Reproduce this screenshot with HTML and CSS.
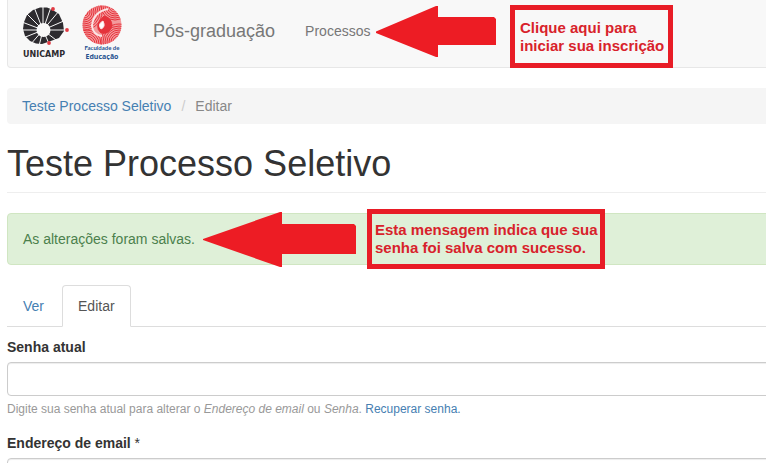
FILE: index.html
```html
<!DOCTYPE html>
<html lang="pt-BR">
<head>
<meta charset="utf-8">
<title>Teste Processo Seletivo</title>
<link rel="stylesheet" href="styles.css">
</head>
<body>
<div class="page">
  <header class="navbar">
    <a class="logo" href="#" aria-label="Unicamp">
      <svg width="48" height="60" viewBox="0 0 48 60">
        <path d="M30 9.500 L25 7.500 L18 7.500 L11 10 L5 15 L2 22 L1 29 L3 36 L8 41 L14 43.500 L20 44 L26 42 L37 38 L42 31 L41 23 L37 14Z" fill="#2d2b2f"/>
        <g stroke="#f8f8f8" stroke-width="1">
          <path d="M21 30L21 5M21 30L12 7M21 30L4 13M21 30L0 22M21 30H0M21 30L1 38M21 30L8 45M21 30L17 46M21 30L28 46M21 30L38 43M21 30H45M21 30L44 20M21 30L37 11M21 30L29 7"/>
        </g>
        <circle cx="21.500" cy="30" r="7" fill="#f8f8f8"/>
        <g fill="#e13a43"><circle cx="31" cy="9" r="1.900"/><circle cx="45" cy="30" r="1.900"/><circle cx="27" cy="43" r="1.900"/></g>
        <text class="unicamp-name" x="1" y="57" fill="#2d2b2f">UNICAMP</text>
      </svg>
    </a>
    <a class="logo" href="#" aria-label="Faculdade de Educação">
      <svg width="46" height="60" viewBox="0 0 46 60">
        <defs><clipPath id="disc"><circle cx="23" cy="25" r="19.500"/></clipPath></defs>
        <circle cx="23" cy="25" r="19.500" fill="#f39a9c"/>
        <g clip-path="url(#disc)" fill="none" stroke="#e5333c">
          <g stroke-width="1">
            <circle cx="5" cy="12" r="4"/><circle cx="5" cy="12" r="6"/><circle cx="5" cy="12" r="8"/><circle cx="5" cy="12" r="10"/><circle cx="5" cy="12" r="12"/><circle cx="5" cy="12" r="14"/><circle cx="5" cy="12" r="16"/><circle cx="5" cy="12" r="18"/>
            <circle cx="40" cy="42" r="4"/><circle cx="40" cy="42" r="6"/><circle cx="40" cy="42" r="8"/><circle cx="40" cy="42" r="10"/><circle cx="40" cy="42" r="12"/><circle cx="40" cy="42" r="14"/><circle cx="40" cy="42" r="16"/><circle cx="40" cy="42" r="18"/>
            <circle cx="36" cy="6" r="4"/><circle cx="36" cy="6" r="6"/><circle cx="36" cy="6" r="8"/><circle cx="36" cy="6" r="10"/><circle cx="36" cy="6" r="12"/><circle cx="36" cy="6" r="14"/>
            <circle cx="8" cy="44" r="4"/><circle cx="8" cy="44" r="6"/><circle cx="8" cy="44" r="8"/><circle cx="8" cy="44" r="10"/><circle cx="8" cy="44" r="12"/><circle cx="8" cy="44" r="14"/>
          </g>
          <path d="M29 9Q14 12 13 26Q14 35 23 36" stroke="#fbe5e5" stroke-width="2"/>
          <path d="M25 16Q33 18 33 26Q30 35 22 33Q14 26 25 16Z" fill="#e5333c"/>
          <path d="M24 21Q18 24 22 29Q27 27 24 21Z" fill="#fff" stroke="#fbe5e5"/>
        </g>
        <text class="faculty-small" x="23" y="50" text-anchor="middle" fill="#24508e">Faculdade de</text>
        <text class="faculty-large" x="23" y="59" text-anchor="middle" fill="#24508e">Educação</text>
      </svg>
    </a>
    <a class="brand" href="#">Pós-graduação</a>
    <nav><a class="nav-link" href="#">Processos</a></nav>
    <svg class="arrow arrow-nav" width="120" height="52" viewBox="0 0 120 52"><path d="M0 25.500L60 0H62V11H118L120 13V39H62V51H60L0 27Z" fill="#ed1c24"/></svg>
    <div class="callout callout-nav">Clique aqui para<br>iniciar sua inscrição</div>
  </header>

  <ol class="breadcrumb">
    <li><a href="#">Teste Processo Seletivo</a></li>
    <li>Editar</li>
  </ol>

  <h1>Teste Processo Seletivo</h1>

  <div class="alert" role="status">
    As alterações foram salvas.
    <svg class="arrow arrow-alert" width="153" height="56" viewBox="0 0 153 56"><path d="M0 27L77 0H79V12H151L153 14V42H79V55H77L0 28Z" fill="#ed1c24"/></svg>
    <div class="callout callout-alert">Esta mensagem indica que sua<br>senha foi salva com sucesso.</div>
  </div>

  <nav class="tabs">
    <a href="#">Ver</a>
    <a class="active" href="#" aria-current="page">Editar</a>
  </nav>

  <form>
    <div class="field">
      <label for="senha">Senha atual</label>
      <input id="senha" type="password">
      <p class="help">Digite sua senha atual para alterar o <em>Endereço de email</em> ou <em>Senha</em>. <a href="#">Recuperar senha.</a></p>
    </div>
    <div class="field">
      <label for="email">Endereço de email <span class="required">*</span></label>
      <input id="email" type="email">
    </div>
  </form>
</div>
</body>
</html>
```

FILE: styles.css
```css
* { box-sizing: border-box; }

html { overflow-x: hidden; scrollbar-width: none; }

body {
  margin: 0;
  background: #fff;
  color: #333;
  font: 14px/20px "Liberation Sans", Arial, sans-serif;
}

a { color: #4680b2; text-decoration: none; }

.page { margin: 0 -8px 0 7px; }

.navbar {
  position: relative;
  display: flex;
  height: 68px;
  margin-bottom: 20px;
  padding-left: 14px;
  background: #f8f8f8;
  border: 1px solid #e7e7e7;
  border-top: 0;
  border-radius: 0 0 4px 4px;
}

.logo { display: block; height: 60px; margin-right: 9px; }
.logo + .logo { margin-right: 0; }
.logo svg { display: block; }

.unicamp-name { font: bold 8px "DejaVu Sans", sans-serif; }
.faculty-small { font: bold 6px Lato, sans-serif; }
.faculty-large { font: bold 7px "Open Sans", sans-serif; }

.brand { margin-left: 28px; color: #777; font-size: 18px; line-height: 62px; }
.nav-link { display: block; margin-left: 30px; color: #777; line-height: 62px; }

.arrow { position: absolute; display: block; }
.arrow-nav { left: 368px; top: 6px; }
.arrow-alert { left: 195px; top: -2px; }

.callout {
  position: absolute;
  border: 5px solid #e81c26;
  color: #d8222b;
  font-size: 15px;
  font-weight: bold;
  line-height: 18px;
  white-space: nowrap;
}
.callout-nav { left: 502px; top: 5px; padding: 9px 4px 8px 5px; }
.callout-alert { left: 359px; top: -5px; padding: 7px 2px 7px 3px; }

.breadcrumb {
  display: flex;
  margin: 0 0 20px;
  padding: 8px 15px;
  list-style: none;
  background: #f5f5f5;
  border-radius: 4px;
  color: #888;
}
.breadcrumb li + li::before { content: "/"; padding: 0 10px; color: #ccc; }

h1 {
  margin: 0 0 20px;
  padding-bottom: 9px;
  border-bottom: 1px solid #eee;
  font-size: 36px;
  font-weight: normal;
  line-height: 39px;
}

.alert {
  position: relative;
  margin-bottom: 20px;
  padding: 15px;
  background: #dff0d8;
  border: 1px solid #d0e6c2;
  border-radius: 4px;
  color: #4b804c;
}

.tabs { display: flex; gap: 2px; margin-bottom: 10px; border-bottom: 1px solid #ddd; }
.tabs a {
  margin-bottom: -1px;
  padding: 10px 15px;
  border: 1px solid transparent;
  border-radius: 4px 4px 0 0;
}
.tabs .active { color: #555; background: #fff; border-color: #ddd #ddd #fff; }

.field { margin-bottom: 15px; }
.field label { display: block; margin-bottom: 5px; font-weight: bold; }
.field input {
  display: block;
  width: 100%;
  height: 34px;
  padding: 6px 12px;
  border: 1px solid #ccc;
  border-radius: 4px;
  box-shadow: inset 0 1px 1px rgba(0, 0, 0, .075);
  font: inherit;
}
.required { font-weight: normal; }
.help { margin: 5px 0 0; color: #999; font-size: 12px; line-height: 17px; }
```
